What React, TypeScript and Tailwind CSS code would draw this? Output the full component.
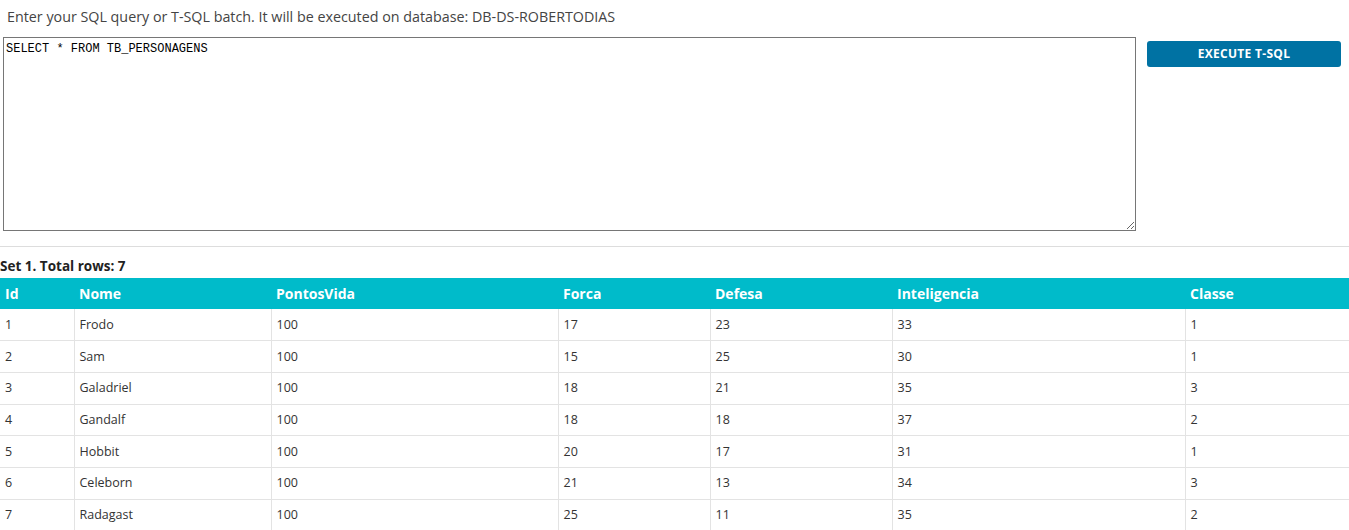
import React from "react";

const cols = [
  { name: "Id", w: 74 },
  { name: "Nome", w: 197 },
  { name: "PontosVida", w: 287 },
  { name: "Forca", w: 152 },
  { name: "Defesa", w: 182 },
  { name: "Inteligencia", w: 293 },
  { name: "Classe", w: 164 },
];

const rows = [
  ["1", "Frodo", "100", "17", "23", "33", "1"],
  ["2", "Sam", "100", "15", "25", "30", "1"],
  ["3", "Galadriel", "100", "18", "21", "35", "3"],
  ["4", "Gandalf", "100", "18", "18", "37", "2"],
  ["5", "Hobbit", "100", "20", "17", "31", "1"],
  ["6", "Celeborn", "100", "21", "13", "34", "3"],
  ["7", "Radagast", "100", "25", "11", "35", "2"],
];

export default function App() {
  return (
    <div className="w-[1349px] bg-white text-[#333] font-['Open_Sans','Noto_Sans',sans-serif]">
      <div className="pt-[7px] pl-[7px] text-[14.3px] leading-[20px] text-[#444]">
        Enter your SQL query or T-SQL batch. It will be executed on database: DB-DS-ROBERTODIAS
      </div>
      <div className="flex items-start mt-[10px]">
        <textarea
          className="ml-[3px] w-[1133px] h-[194px] border border-[#767676] px-[2px] pt-[4px] font-['Liberation_Mono',monospace] text-[12px] leading-[15px] text-black outline-none resize-y"
          defaultValue="SELECT * FROM TB_PERSONAGENS"
        />
        <button className="ml-[11px] mt-[4px] w-[194px] h-[26px] rounded-[3px] bg-[#0072a3] text-white text-[12px] font-bold tracking-[0.3px]">
          EXECUTE T-SQL
        </button>
      </div>
      <div className="mt-[15px] h-px bg-[#dddddd]" />
      <div className="pt-[10px] pb-[3px] text-[13.5px] leading-[18px] font-bold text-[#222]">
        Set 1. Total rows: 7
      </div>
      <table className="border-collapse w-[1349px] table-fixed">
        <colgroup>
          {cols.map((c) => (
            <col key={c.name} style={{ width: c.w }} />
          ))}
        </colgroup>
        <thead>
          <tr className="bg-[#00bbca] h-[31px]">
            {cols.map((c) => (
              <th key={c.name} className="text-left text-white font-bold text-[14px] pl-[5px] py-0">
                {c.name}
              </th>
            ))}
          </tr>
        </thead>
        <tbody>
          {rows.map((r) => (
            <tr key={r[0]} className="h-[31.7px]">
              {r.map((v, i) => (
                <td
                  key={i}
                  className="border border-[#e3e3e3] border-t-0 first:border-l-0 last:border-r-0 pl-[5px] pt-[1px] text-[12.5px] text-[#333] pb-0"
                >
                  {v}
                </td>
              ))}
            </tr>
          ))}
        </tbody>
      </table>
    </div>
  );
}
